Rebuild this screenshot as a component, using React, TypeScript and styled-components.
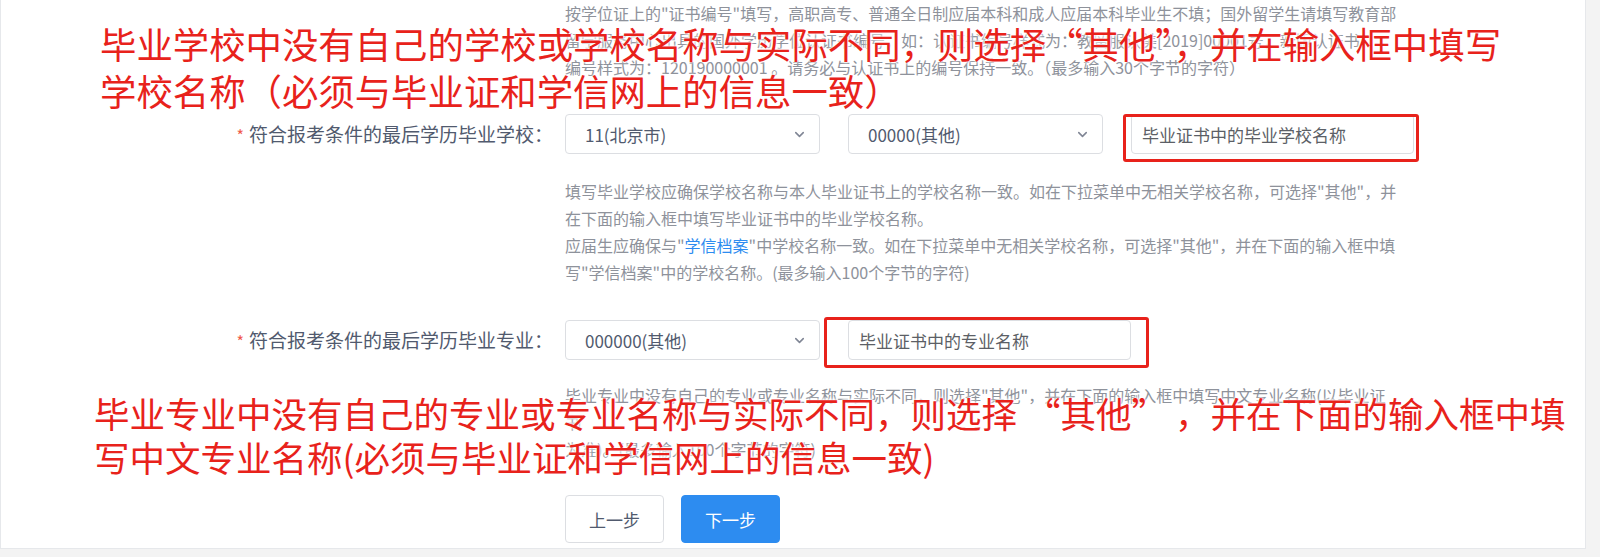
import styled, { createGlobalStyle } from 'styled-components';
import { ChevronDown } from 'lucide-react';

const GlobalStyle = createGlobalStyle`
  html, body {
    margin: 0;
    padding: 0;
    background: #f3f3f3;
    font-family: "Noto Sans CJK SC", "Liberation Sans", sans-serif;
  }
`;

const Page = styled.div`
  width: 1600px;
  height: 557px;
  overflow: hidden;
  background: #f3f3f3;
`;

const Card = styled.div`
  position: relative;
  box-sizing: border-box;
  width: 1586px;
  height: 549px;
  background: #fff;
  border: 1px solid #e6e8eb;
  border-top: none;
  padding-bottom: 31px;
`;

const FormItem = styled.div<{ $top: number }>`
  display: grid;
  grid-template-columns: 552px 1fr;
  column-gap: 12px;
  margin-top: ${(p) => p.$top}px;
`;

const Label = styled.div`
  height: 40px;
  line-height: 40px;
  text-align: right;
  font-size: 19px;
  color: #515a6e;
  white-space: nowrap;
`;

const Required = styled.span`
  color: #f05a4a;
  font-size: 16px;
  margin-right: 5px;
`;

const Controls = styled.div`
  display: flex;
  gap: 28px;
  align-items: center;
`;

const SelectBox = styled.div`
  box-sizing: border-box;
  width: 255px;
  height: 40px;
  padding: 0 12px 0 19px;
  border: 1px solid #dcdee2;
  border-radius: 4px;
  display: flex;
  align-items: center;
  justify-content: space-between;
  font-size: 17px;
  color: #515a6e;
  background: #fff;
`;

const InputWrap = styled.div`
  position: relative;
`;

const TextInput = styled.input`
  box-sizing: border-box;
  width: 283px;
  height: 40px;
  padding: 0 10px;
  border: 1px solid #dcdee2;
  border-radius: 4px;
  font-family: inherit;
  font-size: 17px;
  color: #5c5f66;
  outline: none;
`;

const Highlight = styled.div<{ $t: number; $r: number; $b: number; $l: number }>`
  position: absolute;
  top: ${(p) => p.$t}px;
  right: ${(p) => p.$r}px;
  bottom: ${(p) => p.$b}px;
  left: ${(p) => p.$l}px;
  border: 3px solid #e8221b;
  border-radius: 3px;
  pointer-events: none;
`;

const Hint = styled.div<{ $top: number }>`
  grid-column: 2;
  width: 836px;
  margin-top: ${(p) => p.$top}px;
  font-size: 16px;
  line-height: 27px;
  color: #8e929b;
`;

const TopHint = styled(Hint)`
  margin-left: 564px;
`;

const Link = styled.span`
  color: #2d8cf0;
`;

const Actions = styled.div`
  grid-column: 2;
  display: flex;
  gap: 17px;
`;

const Button = styled.button<{ $primary?: boolean }>`
  box-sizing: border-box;
  width: 99px;
  height: 48px;
  border-radius: 4px;
  font-family: inherit;
  font-size: 17px;
  border: 1px solid ${(p) => (p.$primary ? '#2d8cf0' : '#dcdee2')};
  background: ${(p) => (p.$primary ? '#2d8cf0' : '#fff')};
  color: ${(p) => (p.$primary ? '#fff' : '#515a6e')};
`;

const Note = styled.div<{ $top: number; $left: number; $lh: number; $size: number }>`
  position: absolute;
  top: ${(p) => p.$top}px;
  left: ${(p) => p.$left}px;
  font-size: ${(p) => p.$size}px;
  line-height: ${(p) => p.$lh}px;
  color: #e8221b;
  white-space: nowrap;
  text-shadow: 0 0 2px #fff, 0 0 3px #fff, 0 0 4px #fff;
  pointer-events: none;
`;

function Select({ value }: { value: string }) {
  return (
    <SelectBox>
      <span>{value}</span>
      <ChevronDown size={15} strokeWidth={2.5} color="#808695" />
    </SelectBox>
  );
}

export default function App() {
  return (
    <Page>
      <GlobalStyle />
      <Card>
        <TopHint $top={0}>
          按学位证上的"证书编号"填写，高职高专、普通全日制应届本科和成人应届本科毕业生不填；国外留学生请填写教育部
          <br />
          留学服务中心出具的国外学历学位认证书编号，如：认证书编号样式为：教留服认美[2019]00001号，新版认证书
          <br />
          编号样式为：120190000001 。请务必与认证书上的编号保持一致。（最多输入30个字节的字符）
        </TopHint>

        <FormItem $top={33}>
          <Label>
            <Required>*</Required>符合报考条件的最后学历毕业学校：
          </Label>
          <Controls>
            <Select value="11(北京市)" />
            <Select value="00000(其他)" />
            <InputWrap>
              <TextInput defaultValue="毕业证书中的毕业学校名称" />
              <Highlight $t={0} $r={-5} $b={-8} $l={-8} />
            </InputWrap>
          </Controls>
          <Hint $top={24}>
            填写毕业学校应确保学校名称与本人毕业证书上的学校名称一致。如在下拉菜单中无相关学校名称，可选择"其他"，并在下面的输入框中填写毕业证书中的毕业学校名称。
            <br />
            应届生应确保与"<Link>学信档案</Link>"中学校名称一致。如在下拉菜单中无相关学校名称，可选择"其他"，并在下面的输入框中填写"学信档案"中的学校名称。(最多输入100个字节的字符)
          </Hint>
        </FormItem>

        <FormItem $top={34}>
          <Label>
            <Required>*</Required>符合报考条件的最后学历毕业专业：
          </Label>
          <Controls>
            <Select value="000000(其他)" />
            <InputWrap>
              <TextInput defaultValue="毕业证书中的专业名称" />
              <Highlight $t={-3} $r={-18} $b={-8} $l={-24} />
            </InputWrap>
          </Controls>
          <Hint $top={22}>
            毕业专业中没有自己的专业或专业名称与实际不同，则选择"其他"，并在下面的输入框中填写中文专业名称(以毕业证书
            <br />
            为准)。(最多输入100个字节的字符)
          </Hint>
        </FormItem>

        <FormItem $top={32}>
          <div />
          <Actions>
            <Button>上一步</Button>
            <Button $primary>下一步</Button>
          </Actions>
        </FormItem>

        <Note $top={20} $left={99} $lh={47} $size={36.4}>
          <div>毕业学校中没有自己的学校或学校名称与实际不同，则选择“其他”，并在输入框中填写</div>
          <div>学校名称（必须与毕业证和学信网上的信息一致）</div>
        </Note>
        <Note $top={391} $left={93} $lh={44} $size={35.5}>
          <div>毕业专业中没有自己的专业或专业名称与实际不同，则选择 “其他” ，并在下面的输入框中填</div>
          <div>写中文专业名称(必须与毕业证和学信网上的信息一致)</div>
        </Note>
      </Card>
    </Page>
  );
}
